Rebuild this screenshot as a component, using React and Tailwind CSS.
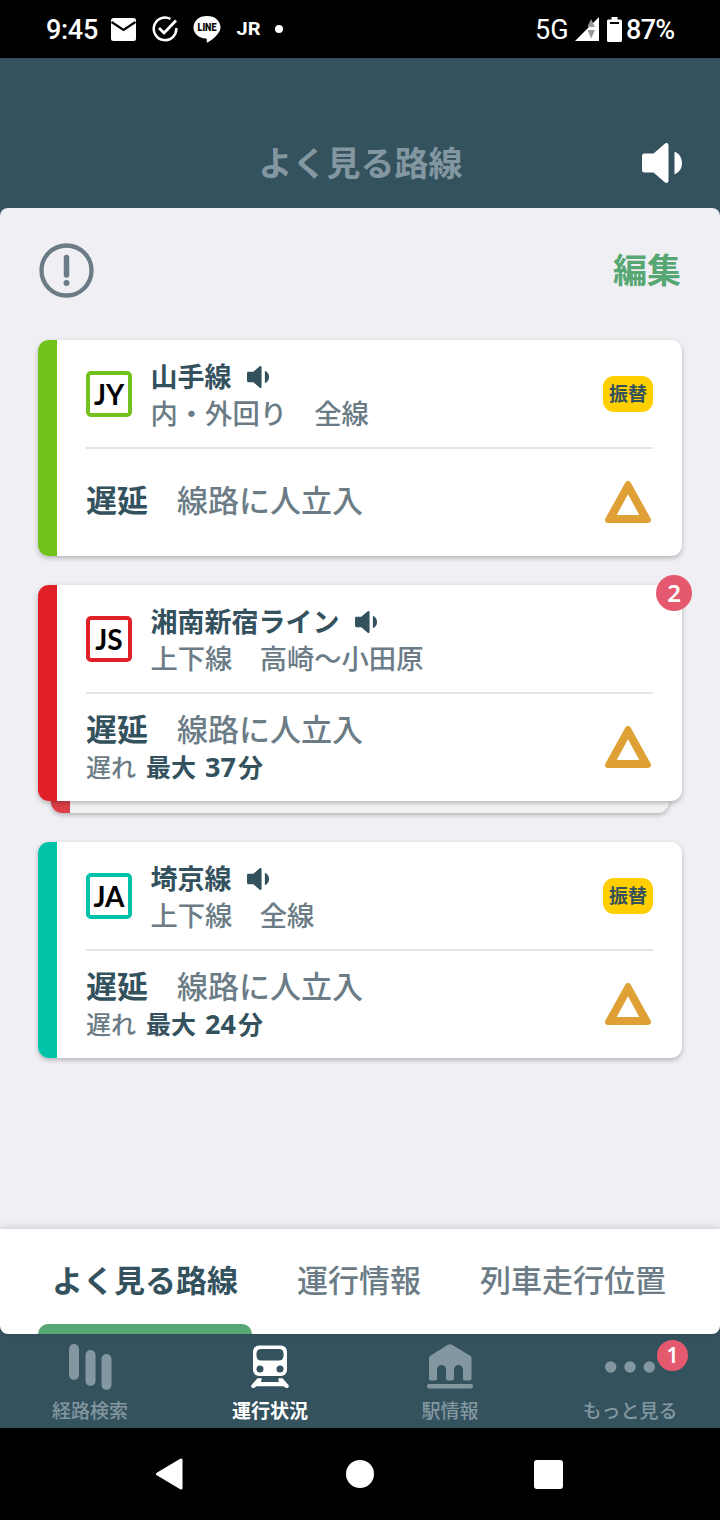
const lines = [
  {
    code: "JY",
    name: "山手線",
    section: "内・外回り　全線",
    bar: "bg-[#72c11c]",
    border: "border-[#72c11c]",
    transfer: true,
    reason: "線路に人立入",
  },
  {
    code: "JS",
    name: "湘南新宿ライン",
    section: "上下線　高崎～小田原",
    bar: "bg-[#e11f26]",
    border: "border-[#e11f26]",
    count: 2,
    reason: "線路に人立入",
    delay: 37,
  },
  {
    code: "JA",
    name: "埼京線",
    section: "上下線　全線",
    bar: "bg-[#02c3a7]",
    border: "border-[#02c3a7]",
    transfer: true,
    reason: "線路に人立入",
    delay: 24,
  },
];

const SpeakerIcon = ({ className }) => (
  <svg viewBox="0 0 40 40" className={className} fill="currentColor">
    <path d="M2.500 10.500H11.500L22.500 1C24.500 -.8 26.500 0 26.500 2.500V37.500C26.500 40 24.500 40.800 22.500 39L11.500 29.500H2.500Q0 29.500 0 27V13Q0 10.500 2.500 10.500Z" />
    <path d="M32.500 8.500Q40 12 40 20Q40 28 32.500 31.500Z" />
  </svg>
);

const StatusBar = () => (
  <div className="h-[58px] bg-black text-white flex items-center justify-between pl-[46px] pr-[45px] font-['Roboto','Noto_Sans_CJK_JP',sans-serif] text-[27px] leading-none">
    <div className="flex items-center">
      <span className="w-[53px] pt-[2px] font-medium tracking-[-0.3px]">9:45</span>
      <svg className="w-[25px] h-[23px] ml-[12px]" viewBox="0 0 25 23">
        <rect width="25" height="23" rx="2.500" fill="#fff" />
        <path d="M.5 4L12.500 12L24.500 4" fill="none" stroke="#000" strokeWidth="2.200" />
      </svg>
      <svg className="w-[26px] h-[26px] ml-[16px]" viewBox="0 0 26 26" fill="none" stroke="#fff" strokeWidth="2.500">
        <path d="M18.500 3A11.300 11.300 0 1 0 24.300 12" />
        <path d="M7 12L12 17L24 4.500" strokeWidth="2.800" />
      </svg>
      <svg className="w-[28px] h-[27px] ml-[15px]" viewBox="0 0 28 27">
        <path d="M14 0C22 0 27.500 4.800 27.500 11.500C27.500 17 20 23.500 14.500 26.500C13 27 14.500 23 13 22.500C5.500 22 .5 17.500 .5 11.500C.5 4.800 6 0 14 0Z" fill="#fff" />
        <text x="4.500" y="15.200" textLength="19" lengthAdjust="spacingAndGlyphs" fontSize="10" fontWeight="900" fill="#000">LINE</text>
      </svg>
      <svg className="w-[31px] h-[22px] ml-[13px]" viewBox="0 0 31 22">
        <text x="2.500" y="17.300" textLength="24" lengthAdjust="spacingAndGlyphs" fontSize="18" fontWeight="700" fill="#fff">JR</text>
      </svg>
      <span className="size-2 rounded-full bg-white ml-[10px]" />
    </div>
    <div className="flex items-center font-medium">
      <span className="w-[35px] pt-[2px] font-normal">5G</span>
      <svg className="w-[24px] h-[24px] ml-[5px]" viewBox="0 0 24 24">
        <path d="M0 24L24 0V24Z" fill="#fff" />
        <path d="M16 2L20 10H12.500ZM12.500 13H20L16.200 21.500Z" fill="#999" />
      </svg>
      <svg className="w-[15px] h-[25px] ml-[8px]" viewBox="0 0 15 25">
        <path d="M4.500 0H10.500V2.500H13.500Q15 2.500 15 4V23.500Q15 25 13.500 25H1.500Q0 25 0 23.500V4Q0 2.500 1.500 2.500H4.500Z" fill="#fff" />
        <path d="M3 5H12V7H3Z" fill="#000" />
      </svg>
      <span className="w-[49px] pt-[2px] ml-[4px] tracking-[-0.7px]">87%</span>
    </div>
  </div>
);

const LineCard = ({ line }) => (
  <div className={line.count ? "relative mb-[41px]" : "relative mb-[29px]"}>
    {line.count && (
      <div className="absolute left-[13px] right-[13px] -bottom-3 h-10 rounded-[11px] overflow-hidden bg-[#f1f1f1] shadow-[0_2px_5px_rgba(0,0,0,0.25)]">
        <div className="w-[19px] h-full bg-[#dc4046]" />
      </div>
    )}
    <div className="relative flex h-[216px] bg-white rounded-[11px] overflow-hidden shadow-[0_2px_5px_rgba(0,0,0,0.25)]">
      <div className={`w-[19px] shrink-0 ${line.bar}`} />
      <div className="flex-1 flex flex-col px-[29px]">
        <div className="h-[109px] flex items-center border-b-2 border-[#e4e4e6]">
          <div className={`size-[46px] shrink-0 rounded-[5px] border-4 flex items-center justify-center text-black font-['Lato',sans-serif] text-[28px] leading-none font-bold ${line.border}`}>
            {line.code}
          </div>
          <div className="ml-[18.5px] pt-[3px] flex-1 text-[27px] leading-[37px] whitespace-nowrap">
            <div className="flex items-center font-bold text-[#34515e]">
              {line.name}
              <SpeakerIcon className="size-[22px] ml-[15px]" />
            </div>
            <div className="text-[27.3px] font-medium text-[#6b7c86]">{line.section}</div>
          </div>
          {line.transfer && (
            <span className="w-[50px] h-[36px] pt-px rounded-[11px] bg-[#ffcf00] flex items-center justify-center text-[19px] leading-none font-bold text-[#34515e]">振替</span>
          )}
        </div>
        <div className="flex-1 flex items-center justify-between pb-[2px]">
          <div className={line.delay ? "pt-[2px]" : "pb-[3px]"}>
            <div className="text-[31px] leading-[38px] font-medium text-[#6b7c86] whitespace-nowrap">
              <span className="font-bold text-[#34515e]">遅延</span>
              <span className="ml-[29px]">{line.reason}</span>
            </div>
            {line.delay && (
              <div className="flex text-[25px] leading-[38px] font-medium text-[#6b7c86]">
                遅れ
                <span className="ml-[10px] font-bold text-[#34515e]">
                  最大<span className="text-[27px] ml-[9px] mr-[2px]">{line.delay}</span>分
                </span>
              </div>
            )}
          </div>
          <svg className="w-[46px] h-[42px] mr-[2px]" viewBox="0 0 46 42">
            <path d="M23 3L43 39H3Z" fill="#dfa036" stroke="#dfa036" strokeWidth="6" strokeLinejoin="round" />
            <path d="M23 13.300L34.300 34H11.700Z" fill="#fff" />
          </svg>
        </div>
      </div>
    </div>
    {line.count && (
      <span className="absolute -top-[10px] -right-[10px] size-9 rounded-full bg-[#e5596f] text-white text-[24px] leading-none font-semibold flex items-center justify-center">
        {line.count}
      </span>
    )}
  </div>
);

const NavItem = ({ label, active, children }) => (
  <div className={`w-[180px] flex flex-col items-center pt-[10px] text-[19px] leading-[40px] ${active ? "text-white font-bold" : "text-[#8297a0] font-medium"}`}>
    <div className="relative h-[47px] shrink-0">{children}</div>
    <span className="whitespace-nowrap">{label}</span>
  </div>
);

export default function App() {
  return (
    <div className="w-[720px] h-[1520px] flex flex-col bg-[#34515e] overflow-hidden font-['Noto_Sans','Noto_Sans_CJK_JP',sans-serif]">
      <StatusBar />

      <header className="h-[150px] shrink-0 grid grid-cols-[1fr_auto_1fr] items-center pt-[59px] pr-[38px]">
        <span />
        <h1 className="pl-[39px] text-[34px] leading-none font-bold text-[#8297a0]">よく見る路線</h1>
        <SpeakerIcon className="size-[40px] justify-self-end text-white" />
      </header>

      <main className="h-[1021px] shrink-0 bg-[#efeff4] rounded-t-[8px] px-[38px] pt-[35px]">
        <div className="h-[55px] mb-[42px] flex items-center justify-between">
          <svg className="size-[55px] ml-px" viewBox="0 0 55 55" fill="none" stroke="#6b7c86" strokeLinecap="round">
            <circle cx="27.500" cy="27.500" r="25" strokeWidth="4.300" />
            <path d="M27.500 14.500V32" strokeWidth="5.500" />
            <circle cx="27.500" cy="40" r="3" fill="#6b7c86" stroke="none" />
          </svg>
          <button className="pr-px pb-[2px] text-[34px] leading-none font-bold text-[#57a773]">編集</button>
        </div>
        {lines.map((line) => (
          <LineCard key={line.code} line={line} />
        ))}
      </main>

      <div className="relative h-[105px] shrink-0 bg-white rounded-b-[8px] px-[38px] flex text-[31px] leading-none font-medium text-[#6b7c86] whitespace-nowrap shadow-[0_-2px_7px_rgba(0,0,0,0.14)]">
        <div className="w-[214px] flex flex-col font-bold text-[#34515e]">
          <span className="flex-1 flex items-center justify-center pt-[8px]">よく見る路線</span>
          <span className="h-[10px] rounded-t-[10px] bg-[#57a773]" />
        </div>
        <div className="w-[214px] flex items-center justify-center pb-[2px]">運行情報</div>
        <div className="w-[214px] flex items-center justify-center pb-[2px]">列車走行位置</div>
      </div>

      <nav className="h-[94px] shrink-0 flex">
        <NavItem label="経路検索">
          <svg className="w-[43px] h-[47px]" viewBox="0 0 43 47" fill="currentColor">
            <rect width="10" height="36" rx="5" />
            <rect x="16.500" y="6" width="10" height="36" rx="5" />
            <rect x="32.500" y="10" width="10" height="36" rx="5" />
          </svg>
        </NavItem>
        <NavItem label="運行状況" active>
          <svg className="w-[38px] h-[47px]" viewBox="0 0 38 47" fill="#fff">
            <rect x="2" y="1.500" width="34" height="30.500" rx="6" />
            <rect x="5.500" y="5" width="27" height="11.500" rx="4.500" fill="#34515e" />
            <circle cx="9" cy="25" r="3.500" fill="#34515e" />
            <circle cx="29" cy="25" r="3.500" fill="#34515e" />
            <path d="M6.500 34.300H10Q11 34.300 10.700 35.300L10 38H28L27.300 35.300Q27 34.300 28 34.300H31.500L37.500 41Q38.500 43 36.500 44H35L32.500 42.300H5.500L3 44H1.500Q-.5 43 .5 41Z" />
          </svg>
        </NavItem>
        <NavItem label="駅情報">
          <svg className="w-[46px] h-[47px]" viewBox="0 0 46 47" fill="currentColor">
            <path d="M21 .8Q23 -.5 25 .8L43.500 12Q44.500 12.700 44.500 14V34.500Q44.500 36.500 42.500 36.500H38Q36 36.500 36 34.500V25.500A4.500 4.500 0 0 0 27 25.500V34.500Q27 36.500 25 36.500H21Q19 36.500 19 34.500V25.500A4.500 4.500 0 0 0 10 25.500V34.500Q10 36.500 8 36.500H3.500Q2 36.500 2 34.500V14Q2 12.700 3 12Z" />
            <rect y="40" width="46" height="4.500" rx="2" />
          </svg>
        </NavItem>
        <NavItem label="もっと見る">
          <svg className="w-[50px] h-[47px]" viewBox="0 0 50 47" fill="currentColor">
            <circle cx="5.700" cy="23" r="5.700" />
            <circle cx="25" cy="23" r="5.700" />
            <circle cx="44.300" cy="23" r="5.700" />
          </svg>
          <span className="absolute left-[52px] -top-[4px] size-[31px] rounded-full bg-[#e5596f] text-white text-[21px] leading-none font-semibold flex items-center justify-center">1</span>
        </NavItem>
      </nav>

      <div className="h-[92px] shrink-0 bg-black flex items-center justify-between pl-[155px] pr-[157px]">
        <svg className="w-[28px] h-[32px]" viewBox="0 0 28 32">
          <path d="M2.500 16L26 2V30Z" fill="#fff" stroke="#fff" strokeWidth="3" strokeLinejoin="round" />
        </svg>
        <span className="size-[28px] rounded-full bg-white ml-[3px]" />
        <span className="size-[29px] rounded-[3px] bg-white" />
      </div>
    </div>
  );
}
